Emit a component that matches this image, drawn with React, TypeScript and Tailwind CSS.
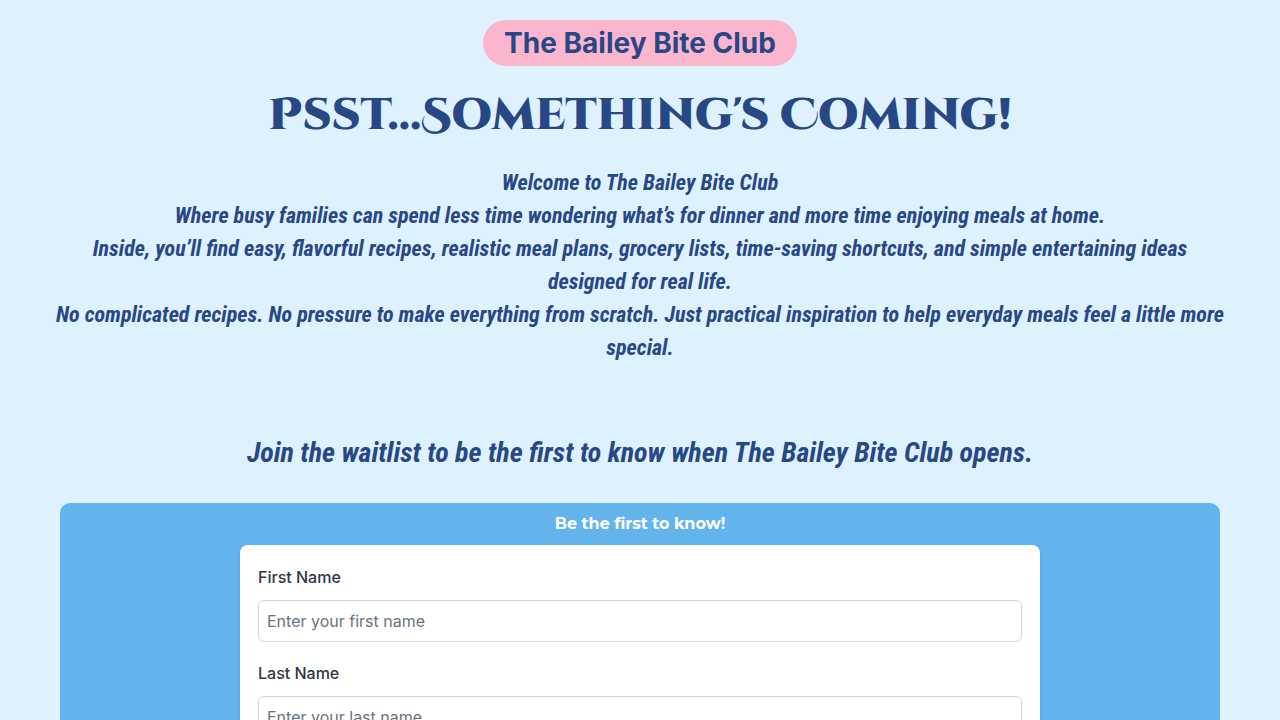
const fields = [
	{ id: "firstName", label: "First Name", placeholder: "Enter your first name" },
	{ id: "lastName", label: "Last Name", placeholder: "Enter your last name" },
];

function Intro() {
	return (
		<div className="w-full mt-5 text-[22px] leading-[33px] font-bold italic font-['Roboto_Condensed','Liberation_Sans_Narrow','Roboto',sans-serif]">
			<p>Welcome to The Bailey Bite Club</p>
			<p>
				Where busy families can spend less time wondering what’s for dinner and
				more time enjoying meals at home.
			</p>
			<p>
				Inside, you’ll find easy, flavorful recipes, realistic meal plans,
				grocery lists, time-saving shortcuts, and simple entertaining ideas
				designed for real life.
			</p>
			<p>
				No complicated recipes. No pressure to make everything from scratch.
				Just practical inspiration to help everyday meals feel a little more
				special.
			</p>
		</div>
	);
}

function WaitlistForm() {
	return (
		<section className="w-full max-w-[1160px] mt-[29px] pb-10 rounded-[10px] bg-[#63b3ed] flex flex-col items-center">
			<h3 className="py-2 text-base leading-[26px] font-bold text-white font-['Montserrat','Open_Sans',sans-serif]">
				Be the first to know!
			</h3>
			<form className="w-full max-w-[800px] p-[18px] rounded-lg bg-white shadow-md flex flex-col gap-[17px] text-left">
				{fields.map((field) => (
					<div className="flex flex-col gap-[9px]" key={field.id}>
						<label
							htmlFor={field.id}
							className="text-base leading-7 font-medium text-[#2d3748]"
						>
							{field.label}
						</label>
						<input
							id={field.id}
							type="text"
							placeholder={field.placeholder}
							className="w-full h-[42px] px-2 rounded-md border border-[#d1d5db] bg-white text-base text-[#2d3748] placeholder:text-[#6b7280]"
						/>
					</div>
				))}
			</form>
		</section>
	);
}

export default function App() {
	return (
		<main className="w-full min-h-screen px-[54px] pt-5 pb-10 flex flex-col items-center text-center bg-[#def1ff] text-[#284785] font-['Inter',sans-serif]">
			<div className="px-[21px] py-[2px] rounded-full bg-[#fbb6ce] text-[28px] leading-[42px] font-bold">
				The Bailey Bite Club
			</div>
			<h1 className="mt-5 text-[45px] leading-[60px] font-black font-['Cinzel_Decorative','Liberation_Serif',serif]">
				Psst...Something's Coming!
			</h1>
			<Intro />
			<h2 className="mt-[68px] text-[28px] leading-[42px] font-bold italic font-['Roboto_Condensed','Liberation_Sans_Narrow','Roboto',sans-serif]">
				Join the waitlist to be the first to know when The Bailey Bite Club
				opens.
			</h2>
			<WaitlistForm />
		</main>
	);
}
